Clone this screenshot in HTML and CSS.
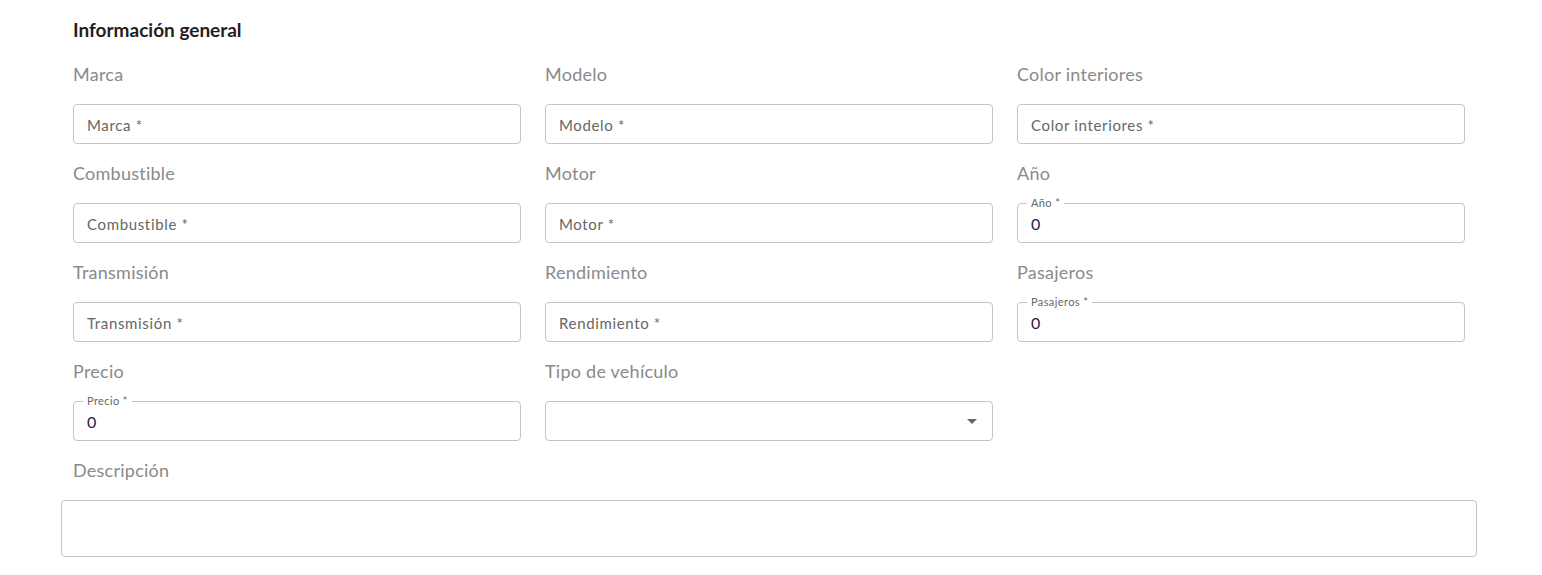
FILE: index.html
```html
<!DOCTYPE html>
<html lang="es">
<head>
<meta charset="utf-8">
<title>Información general</title>
<link rel="stylesheet" href="styles.css">
</head>
<body>
<div class="page">
  <h2 class="title">Información general</h2>
  <div class="grid">
    <div class="field">
      <div class="label">Marca</div>
      <div class="input"><span class="ph">Marca *</span></div>
    </div>
    <div class="field">
      <div class="label">Modelo</div>
      <div class="input"><span class="ph">Modelo *</span></div>
    </div>
    <div class="field">
      <div class="label">Color interiores</div>
      <div class="input"><span class="ph">Color interiores *</span></div>
    </div>
    <div class="field">
      <div class="label">Combustible</div>
      <div class="input"><span class="ph">Combustible *</span></div>
    </div>
    <div class="field">
      <div class="label">Motor</div>
      <div class="input"><span class="ph">Motor *</span></div>
    </div>
    <div class="field">
      <div class="label">Año</div>
      <div class="input notched"><span class="float">Año *</span><span class="val">0</span></div>
    </div>
    <div class="field">
      <div class="label">Transmisión</div>
      <div class="input"><span class="ph">Transmisión *</span></div>
    </div>
    <div class="field">
      <div class="label">Rendimiento</div>
      <div class="input"><span class="ph">Rendimiento *</span></div>
    </div>
    <div class="field">
      <div class="label">Pasajeros</div>
      <div class="input notched"><span class="float">Pasajeros *</span><span class="val">0</span></div>
    </div>
    <div class="field">
      <div class="label">Precio</div>
      <div class="input notched"><span class="float">Precio *</span><span class="val">0</span></div>
    </div>
    <div class="field">
      <div class="label">Tipo de vehículo</div>
      <div class="input select"><span class="arrow"></span></div>
    </div>
    <div class="field empty"></div>
  </div>
  <div class="desc">
    <div class="label desc-label">Descripción</div>
    <div class="textarea"></div>
  </div>
</div>
</body>
</html>
```

FILE: styles.css
```css
* { box-sizing: border-box; }
html, body { margin: 0; padding: 0; background: #ffffff; }
body { font-family: Lato, "Open Sans", "Liberation Sans", sans-serif; }

.page {
  width: 1416px;
  margin-left: 61px;
  padding-top: 18px;
}

.title {
  margin: 0 12px;
  font-size: 19px;
  line-height: 24px;
  font-weight: 700;
  color: #1f1f1f;
}

.grid {
  display: grid;
  grid-template-columns: repeat(3, 448px);
  column-gap: 24px;
  row-gap: 17px;
  padding: 20px 12px 0;
}

.label {
  font-size: 18px;
  line-height: 24px;
  letter-spacing: 0.25px;
  color: #8a8a8a;
  margin-bottom: 18px;
  height: 24px;
}

.input {
  position: relative;
  height: 40px;
  border: 1px solid #c4c4c4;
  border-radius: 4px;
  display: flex;
  align-items: center;
  padding: 0 13px;
}

.ph {
  font-size: 15px;
  letter-spacing: 0.65px;
  color: #666666;
  margin-top: 1px;
}

.notched .float {
  position: absolute;
  top: -8px;
  left: 9px;
  padding: 0 4px;
  background: #ffffff;
  font-size: 11px;
  line-height: 14px;
  letter-spacing: 0.4px;
  color: #666666;
}

.val {
  font-size: 16px;
  color: #1c2145;
  margin-top: 1px;
}

.select { justify-content: flex-end; padding-right: 15px; }

.arrow {
  width: 0;
  height: 0;
  border-left: 5px solid transparent;
  border-right: 5px solid transparent;
  border-top: 5px solid #666666;
}

.desc { padding-top: 17px; }

.desc-label { margin-left: 12px; }

.textarea {
  height: 57px;
  border: 1px solid #c4c4c4;
  border-radius: 4px;
}
```
